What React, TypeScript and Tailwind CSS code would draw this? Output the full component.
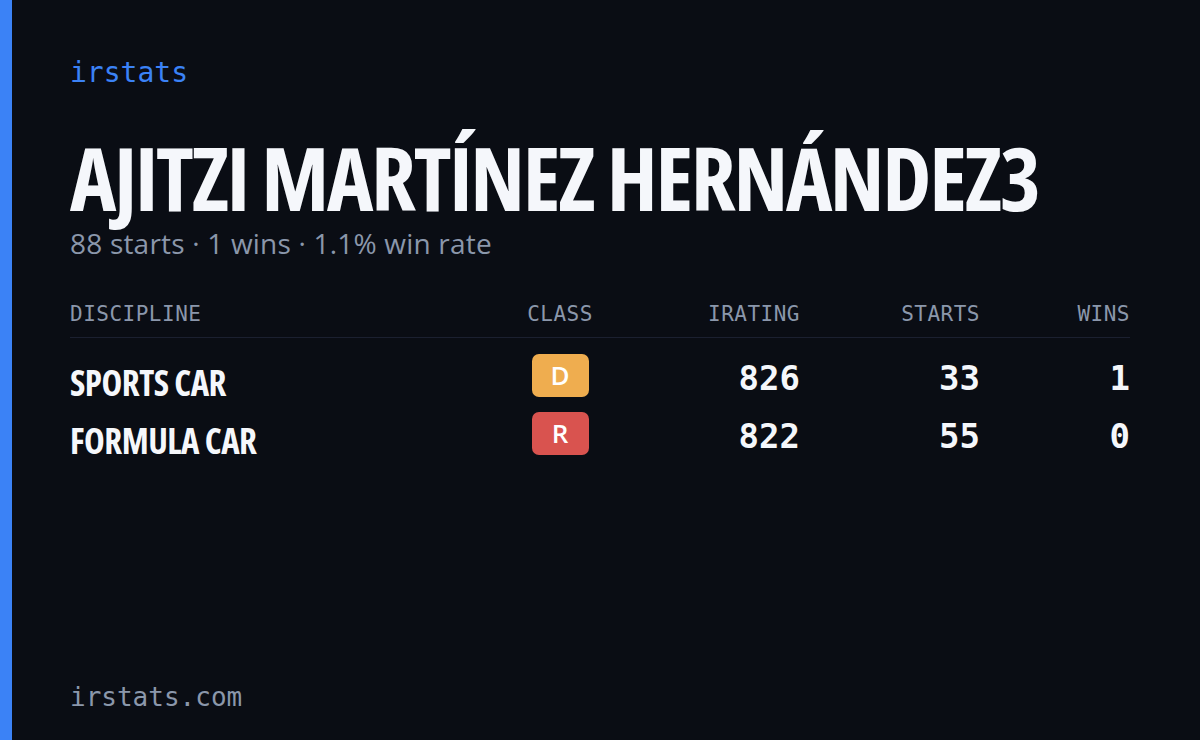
const mono = "font-['DejaVu_Sans_Mono',monospace]";
const condensed = "font-['Open_Sans',sans-serif] [font-stretch:condensed] font-bold";

const rows = [
  { discipline: "SPORTS CAR", cls: "D", badge: "bg-[#efad4f]", irating: 826, starts: 33, wins: 1 },
  { discipline: "FORMULA CAR", cls: "R", badge: "bg-[#d9534f]", irating: 822, starts: 55, wins: 0 },
];

const cols = "grid grid-cols-[425px_130px_175px_180px_150px]";

export default function App() {
  return (
    <div className="flex w-[1200px] h-[740px] bg-[#0a0d14] overflow-hidden">
      <div className="w-[12px] bg-[#3b82f6]" />
      <div className="flex-1 flex flex-col pl-[58px] pr-[70px]">
        <div className={`${mono} text-[28px] leading-none text-[#3b82f6] mt-[59px]`}>irstats</div>

        <h1 className={`${condensed} text-[88px] leading-none tracking-[-2.3px] text-[#f5f7fb] whitespace-nowrap mt-[46px]`}>
          AJITZI MARTÍNEZ HERNÁNDEZ3
        </h1>
        <p className="font-['Open_Sans',sans-serif] font-medium text-[28px] leading-none tracking-[0.2px] text-[#8b97ab] mt-[8px]">
          88 starts · 1 wins · 1.1% win rate
        </p>

        <div className={`${cols} ${mono} text-[21px] tracking-[0.5px] text-[#8b97ab] mt-[42px] pb-[6px] border-b border-[#1b2030]`}>
          <div>DISCIPLINE</div>
          <div className="text-center">CLASS</div>
          <div className="text-right">IRATING</div>
          <div className="text-right">STARTS</div>
          <div className="text-right">WINS</div>
        </div>

        <div className="flex flex-col gap-[15px] mt-[9px]">
          {rows.map((r) => (
            <div key={r.discipline} className={`${cols} items-center h-[43px]`}>
              <div className={`${condensed} text-[35px] leading-none text-[#f5f7fb] tracking-[-0.5px] pt-[14px]`}>
                {r.discipline}
              </div>
              <div className="flex justify-center">
                <div
                  className={`${r.badge} w-[57px] h-[43px] rounded-[7px] flex items-center justify-center font-['Open_Sans',sans-serif] font-semibold text-[26px] text-white`}
                >
                  {r.cls}
                </div>
              </div>
              <div className={`${mono} font-bold text-[34px] text-right text-[#f5f7fb] pt-[6px]`}>{r.irating}</div>
              <div className={`${mono} font-bold text-[34px] text-right text-[#f5f7fb] pt-[6px]`}>{r.starts}</div>
              <div className={`${mono} font-bold text-[34px] text-right text-[#f5f7fb] pt-[6px]`}>{r.wins}</div>
            </div>
          ))}
        </div>

        <div className={`${mono} text-[26px] leading-none text-[#8b97ab] mt-auto mb-[30px]`}>irstats.com</div>
      </div>
    </div>
  );
}
